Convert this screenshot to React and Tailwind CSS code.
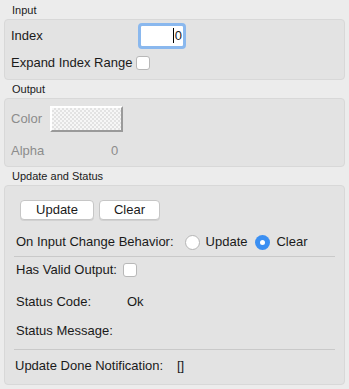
import React, { useState } from 'react';

const font = { fontFamily: '"Liberation Sans", Arial, sans-serif' };

const Section = ({ title, height, children }) => (
  <div className="flex flex-col">
    <div className="h-[18px] pl-[12px] text-[11px] leading-[18px] text-[#1a1a1a]">{title}</div>
    <div className={`mx-[4px] rounded-[4px] border border-[#d8d8d8] bg-[#e3e3e3] ${height}`}>{children}</div>
  </div>
);

const Checkbox = () => (
  <span className="inline-block h-[14px] w-[14px] rounded-[3px] border border-[#b8b8b8] bg-white" />
);

const Radio = ({ checked }) =>
  checked ? (
    <span className="flex h-[15px] w-[15px] items-center justify-center rounded-full bg-[#3b8ff2]">
      <span className="h-[5px] w-[5px] rounded-full bg-white" />
    </span>
  ) : (
    <span className="inline-block h-[15px] w-[15px] rounded-full border border-[#b5b5b5] bg-white" />
  );

const Button = ({ children, w }) => (
  <button className={`h-[20px] ${w} rounded-[4px] border border-[#c6c6c6] bg-white text-[13px] leading-[18px] text-[#1a1a1a] shadow-[0_1px_0_rgba(0,0,0,0.08)]`}>
    {children}
  </button>
);

export default function App() {
  const [mode, setMode] = useState('clear');

  return (
    <div className="h-[389px] w-[349px] bg-[#ececec] pt-[1px] text-[13px] text-[#1a1a1a]" style={font}>
      <Section title="Input" height="h-[61px]">
        <div className="flex flex-col pt-[2px]">
          <div className="flex h-[27px] items-center pl-[6px]">
            <span className="w-[130px]">Index</span>
            <div className="flex h-[20px] w-[42px] items-center justify-end rounded-[1px] bg-white pr-[1px] outline outline-[3px] outline-[#8ab8ee]">
              <span className="border-l border-black pl-[1px] leading-[15px]">0</span>
            </div>
          </div>
          <div className="flex h-[28px] items-center pl-[6px]">
            <span>Expand Index Range</span>
            <span className="ml-[4px] flex"><Checkbox /></span>
          </div>
        </div>
      </Section>

      <Section title="Output" height="h-[69px]">
        <div className="flex flex-col pt-[6px] text-[#8c8c8c]">
          <div className="flex h-[27px] items-center pl-[6px]">
            <span className="w-[39px]">Color</span>
            <div className="h-[26px] w-[73px] border-[2px] border-white border-b-[#9a9a9a] border-r-[#9a9a9a] bg-[#f6f6f6] bg-[conic-gradient(#e2e2e2_25%,transparent_0_50%,#e2e2e2_0_75%,transparent_0)] bg-[length:4px_4px]" />
          </div>
          <div className="flex h-[38px] items-center pl-[6px]">
            <span className="w-[100px]">Alpha</span>
            <span>0</span>
          </div>
        </div>
      </Section>

      <Section title="Update and Status" height="h-[200px]">
        <div className="flex flex-col px-[9px] pt-[14px]">
          <div className="flex h-[20px] gap-[5px] pl-[6px]">
            <Button w="w-[74px]">Update</Button>
            <Button w="w-[61px]">Clear</Button>
          </div>
          <div className="mt-[11px] flex h-[22px] items-center pl-[2px]">
            <span>On Input Change Behavior:</span>
            <button className="ml-[11px] flex items-center gap-[6px]" onClick={() => setMode('update')}>
              <Radio checked={mode === 'update'} />
              <span>Update</span>
            </button>
            <button className="ml-[8px] flex items-center gap-[6px]" onClick={() => setMode('clear')}>
              <Radio checked={mode === 'clear'} />
              <span>Clear</span>
            </button>
          </div>
          <div className="mt-[3px] border-t border-[#c9c9c9]" />
          <div className="flex h-[26px] items-center pl-[2px]">
            <span>Has Valid Output:</span>
            <span className="ml-[6px] flex"><Checkbox /></span>
          </div>
          <div className="flex h-[38px] items-center pl-[2px]">
            <span className="w-[111px]">Status Code:</span>
            <span>Ok</span>
          </div>
          <div className="flex h-[20px] items-center pl-[2px]">
            <span>Status Message:</span>
          </div>
          <div className="mt-[8px] border-t border-[#c9c9c9]" />
          <div className="flex h-[32px] items-center pl-[1px]">
            <span className="w-[162px]">Update Done Notification:</span>
            <span>[]</span>
          </div>
        </div>
      </Section>
    </div>
  );
}
